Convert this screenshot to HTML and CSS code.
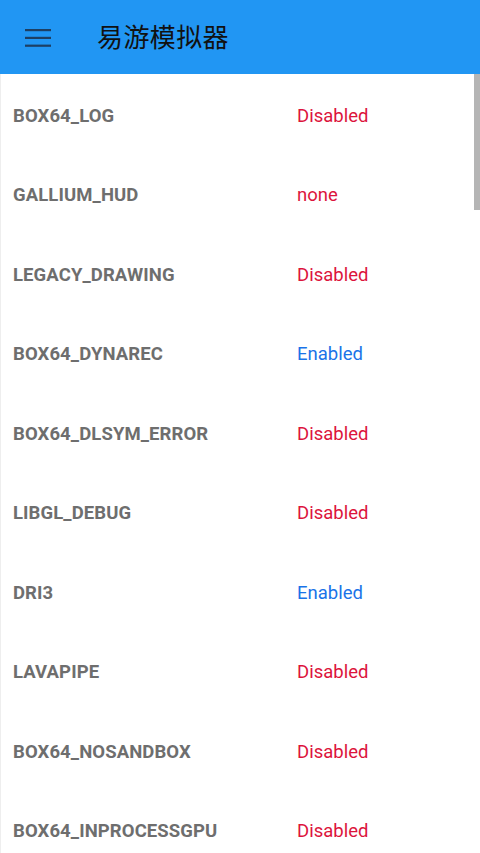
FILE: index.html
```html
<!DOCTYPE html>
<html lang="zh">
<head>
<meta charset="utf-8">
<title>易游模拟器</title>
<link rel="stylesheet" href="styles.css">
</head>
<body>
<div class="screen">
  <header class="appbar">
    <svg class="menu" width="26" height="18" viewBox="0 0 26 18" aria-hidden="true">
      <rect x="0" y="0" width="26" height="2.2" fill="#1d3f63"/>
      <rect x="0" y="7.8" width="26" height="2.2" fill="#1d3f63"/>
      <rect x="0" y="15.6" width="26" height="2.2" fill="#1d3f63"/>
    </svg>
    <h1 class="title">易游模拟器</h1>
  </header>
  <main class="list">
    <div class="row"><span class="key">BOX64_LOG</span><span class="val off">Disabled</span></div>
    <div class="row"><span class="key">GALLIUM_HUD</span><span class="val off">none</span></div>
    <div class="row"><span class="key">LEGACY_DRAWING</span><span class="val off">Disabled</span></div>
    <div class="row"><span class="key">BOX64_DYNAREC</span><span class="val on">Enabled</span></div>
    <div class="row"><span class="key">BOX64_DLSYM_ERROR</span><span class="val off">Disabled</span></div>
    <div class="row"><span class="key">LIBGL_DEBUG</span><span class="val off">Disabled</span></div>
    <div class="row"><span class="key">DRI3</span><span class="val on">Enabled</span></div>
    <div class="row"><span class="key">LAVAPIPE</span><span class="val off">Disabled</span></div>
    <div class="row"><span class="key">BOX64_NOSANDBOX</span><span class="val off">Disabled</span></div>
    <div class="row"><span class="key">BOX64_INPROCESSGPU</span><span class="val off">Disabled</span></div>
    <div class="scrollbar"></div>
  </main>
</div>
</body>
</html>
```
FILE: styles.css
```css
html, body {
  margin: 0;
  padding: 0;
  background: #ffffff;
}
body {
  font-family: Roboto, "Noto Sans", "Noto Sans CJK SC", sans-serif;
}
.screen {
  width: 480px;
  height: 853px;
  overflow: hidden;
  display: flex;
  flex-direction: column;
  background: #ffffff;
}
.appbar {
  height: 74px;
  flex: 0 0 74px;
  background: #2196f3;
  display: flex;
  align-items: center;
  padding-left: 25px;
  box-sizing: border-box;
}
.menu {
  display: block;
  margin-top: 1px;
}
.title {
  margin: -3px 0 0 46px;
  font-family: "Noto Sans CJK SC", sans-serif;
  font-weight: 400;
  font-size: 26px;
  color: #111111;
  letter-spacing: 0.4px;
}
.list {
  position: relative;
  flex: 1;
  border-left: 1px solid #eeeeee;
  padding-top: 2px;
}
.row {
  height: 79.5px;
  display: flex;
  align-items: center;
  padding-left: 12px;
}
.key {
  width: 284px;
  font-weight: 700;
  font-size: 18.5px;
  color: #6e6e6e;
  letter-spacing: 0.1px;
}
.val {
  font-size: 18.5px;
  font-weight: 400;
}
.off { color: #dc143c; }
.on { color: #1a73e8; }
.scrollbar {
  position: absolute;
  top: 0;
  right: 0;
  width: 6px;
  height: 136px;
  background: #b5b5b5;
}
```
